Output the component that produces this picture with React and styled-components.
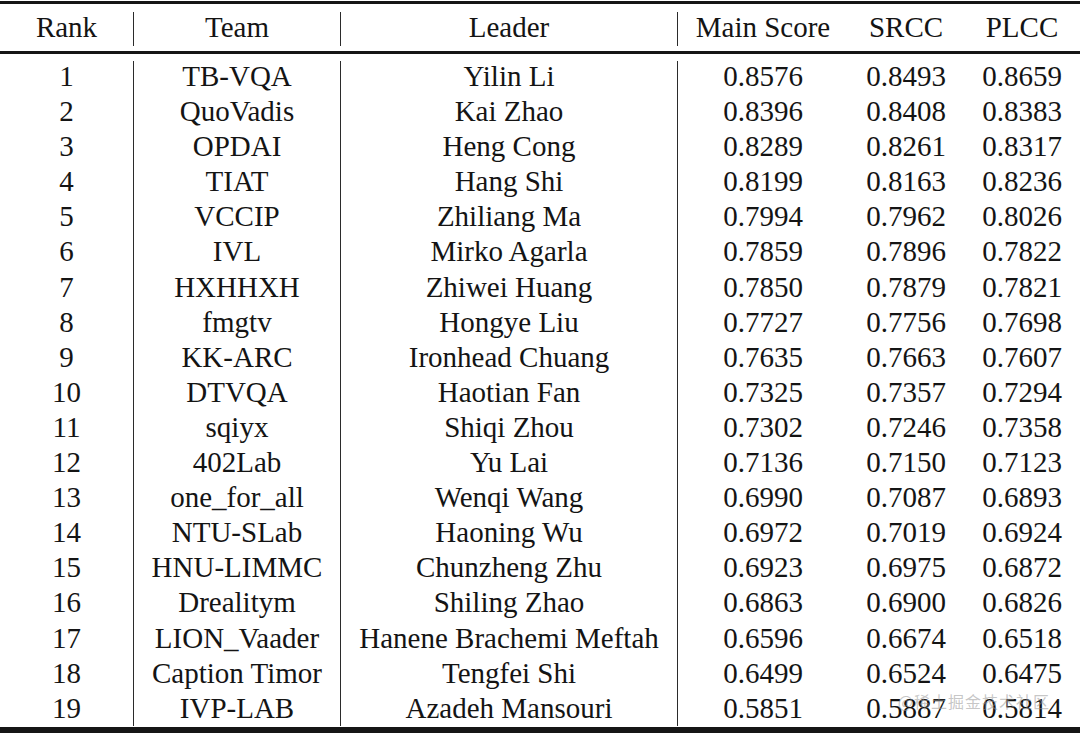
import styled, { createGlobalStyle } from 'styled-components';

const GlobalStyle = createGlobalStyle`
  html, body {
    margin: 0;
    padding: 0;
    background: #ffffff;
  }
  body {
    padding-top: 1px;
    font-family: "Liberation Serif", "Times New Roman", serif;
    color: #141414;
  }
`;

const COLUMNS = '134px 207px 337px 170px 116px 1fr';

const rows = [
  ['1', 'TB-VQA', 'Yilin Li', '0.8576', '0.8493', '0.8659'],
  ['2', 'QuoVadis', 'Kai Zhao', '0.8396', '0.8408', '0.8383'],
  ['3', 'OPDAI', 'Heng Cong', '0.8289', '0.8261', '0.8317'],
  ['4', 'TIAT', 'Hang Shi', '0.8199', '0.8163', '0.8236'],
  ['5', 'VCCIP', 'Zhiliang Ma', '0.7994', '0.7962', '0.8026'],
  ['6', 'IVL', 'Mirko Agarla', '0.7859', '0.7896', '0.7822'],
  ['7', 'HXHHXH', 'Zhiwei Huang', '0.7850', '0.7879', '0.7821'],
  ['8', 'fmgtv', 'Hongye Liu', '0.7727', '0.7756', '0.7698'],
  ['9', 'KK-ARC', 'Ironhead Chuang', '0.7635', '0.7663', '0.7607'],
  ['10', 'DTVQA', 'Haotian Fan', '0.7325', '0.7357', '0.7294'],
  ['11', 'sqiyx', 'Shiqi Zhou', '0.7302', '0.7246', '0.7358'],
  ['12', '402Lab', 'Yu Lai', '0.7136', '0.7150', '0.7123'],
  ['13', 'one_for_all', 'Wenqi Wang', '0.6990', '0.7087', '0.6893'],
  ['14', 'NTU-SLab', 'Haoning Wu', '0.6972', '0.7019', '0.6924'],
  ['15', 'HNU-LIMMC', 'Chunzheng Zhu', '0.6923', '0.6975', '0.6872'],
  ['16', 'Drealitym', 'Shiling Zhao', '0.6863', '0.6900', '0.6826'],
  ['17', 'LION_Vaader', 'Hanene Brachemi Meftah', '0.6596', '0.6674', '0.6518'],
  ['18', 'Caption Timor', 'Tengfei Shi', '0.6499', '0.6524', '0.6475'],
  ['19', 'IVP-LAB', 'Azadeh Mansouri', '0.5851', '0.5887', '0.5814'],
];

const headers = ['Rank', 'Team', 'Leader', 'Main Score', 'SRCC', 'PLCC'];
// 세로줄이 있는 컬럼 (Rank | Team | Leader | ...)
const dividers = [true, true, true, false, false, false];

const Table = styled.div`
  position: relative;
  width: 1080px;
  border-top: 3px solid #151515;
  border-bottom: 6px solid #151515;
  font-size: 29px;
`;

const HeadRow = styled.div`
  display: grid;
  grid-template-columns: ${COLUMNS};
  padding: 8px 0 5px;
  border-bottom: 3px solid #151515;
`;

const HeadCell = styled.div`
  height: 34px;
  line-height: 31px;
  padding-bottom: 3px;
  box-sizing: border-box;
  text-align: center;
  white-space: nowrap;
  border-right: ${(props) => (props.$divider ? '1.5px solid #2b2b2b' : 'none')};
`;

const Body = styled.div`
  display: grid;
  grid-template-columns: ${COLUMNS};
  padding: 7px 0 1px;
`;

const Column = styled.div`
  border-right: ${(props) => (props.$divider ? '1.5px solid #2b2b2b' : 'none')};
`;

const Cells = styled.div`
  margin-top: -2px;
  display: flex;
  flex-direction: column;
`;

const Cell = styled.div`
  height: 35.1px;
  line-height: 35px;
  text-align: center;
  white-space: nowrap;
`;

const Watermark = styled.div`
  position: absolute;
  right: 30px;
  bottom: 14px;
  font-family: "Noto Sans CJK SC", "Noto Sans", sans-serif;
  font-size: 16px;
  letter-spacing: 1px;
  color: rgba(150, 150, 150, 0.55);
  pointer-events: none;
`;

export default function App() {
  return (
    <>
      <GlobalStyle />
      <Table>
        <HeadRow>
          {headers.map((h, i) => (
            <HeadCell key={h} $divider={dividers[i]}>{h}</HeadCell>
          ))}
        </HeadRow>
        <Body>
          {headers.map((h, col) => (
            <Column key={h} $divider={dividers[col]}>
              <Cells>
                {rows.map((row) => (
                  <Cell key={row[0]}>{row[col]}</Cell>
                ))}
              </Cells>
            </Column>
          ))}
        </Body>
        <Watermark>@稀土掘金技术社区</Watermark>
      </Table>
    </>
  );
}
